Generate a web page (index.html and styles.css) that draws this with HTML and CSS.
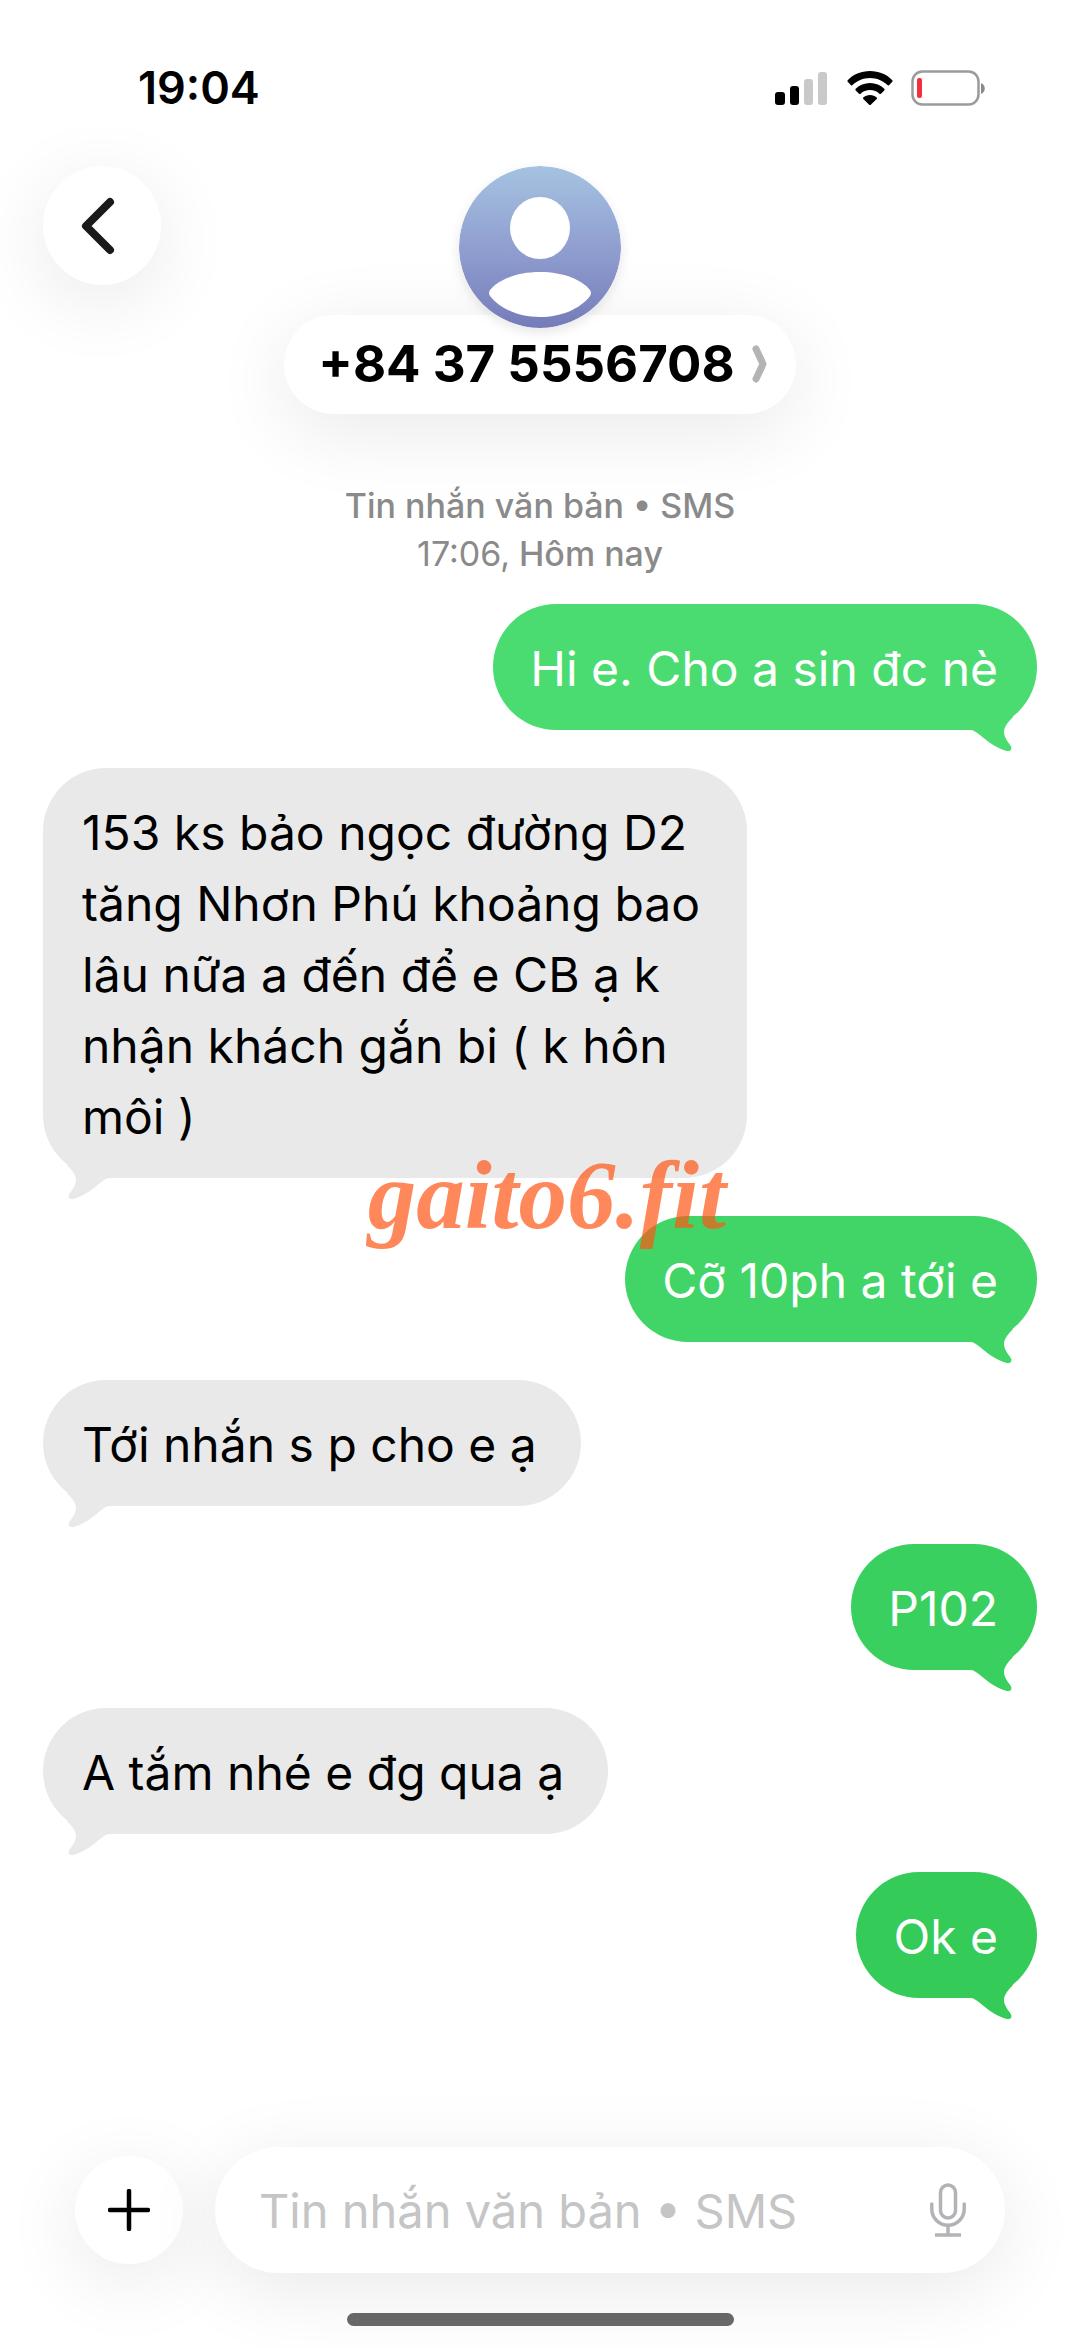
FILE: index.html
```html
<!DOCTYPE html>
<html lang="vi">
<head>
<meta charset="utf-8">
<meta name="viewport" content="width=device-width, initial-scale=1">
<title>+84 37 5556708</title>
<link rel="stylesheet" href="styles.css">
</head>
<body>
<svg class="defs" aria-hidden="true">
  <symbol id="tail" viewBox="0 0 72 64">
    <path d="M2 34V41H5C9 41 11 43 15 46C22 52 31 59 40 61.500C45 63 47.500 61 46 57.500C44 54 39 49 39 43C39 38 43 33 48 28L30 8Z"/>
  </symbol>
</svg>

<div class="status">
  <span class="status-time">19:04</span>
  <div class="status-icons">
    <svg width="54" height="34" viewBox="0 0 54 34" role="img" aria-label="Sóng di động">
      <rect x="0" y="21" width="10" height="13" rx="3"/>
      <rect x="15" y="15" width="9" height="19" rx="3"/>
      <rect x="29" y="8" width="9" height="26" rx="3" fill="#c9c9c9"/>
      <rect x="43" y="1" width="9" height="33" rx="3" fill="#c9c9c9"/>
    </svg>
    <svg width="46" height="34" viewBox="0 0 46 34" role="img" aria-label="Wi-Fi">
      <path d="M23 0C32 0 40 3.500 45.300 9.200Q46 10 45.300 10.800L42 14.200Q41.300 14.800 40.500 14.100C36 9.800 30 7 23 7S10 9.800 5.500 14.100Q4.700 14.800 4 14.200L.7 10.800Q0 10 .7 9.200C6 3.500 14 0 23 0Z"/>
      <path d="M23 12C28.500 12 33.500 14.200 37.300 17.800Q38 18.600 37.300 19.400L34 22.700Q33.200 23.400 32.400 22.700C30 20.300 26.600 19 23 19S16 20.300 13.600 22.700Q12.800 23.400 12 22.700L8.700 19.400Q8 18.600 8.700 17.800C12.500 14.200 17.500 12 23 12Z"/>
      <path d="M23 24C25.700 24 28 25 29.700 26.600Q30.400 27.300 29.700 28L23.800 33.700Q23 34.500 22.200 33.700L16.300 28Q15.600 27.300 16.300 26.600C18 25 20.300 24 23 24Z"/>
    </svg>
    <svg width="74" height="36" viewBox="0 0 74 36" role="img" aria-label="Pin yếu">
      <rect x="1.500" y="1.500" width="66" height="33" rx="10" fill="none" stroke="#9b9b9b" stroke-width="2.500"/>
      <rect x="6" y="8" width="5" height="20" rx="2" fill="#f5303e"/>
      <path d="M70 13C75 15 75 22 70 24Z" fill="#8a8a8a"/>
    </svg>
  </div>
</div>

<header class="header">
  <button class="round back" type="button" aria-label="Quay lại">
    <svg width="34" height="58" viewBox="0 0 34 58"><path d="M29 5 5 29 29 53" fill="none" stroke="#1a1a1a" stroke-width="8" stroke-linecap="round" stroke-linejoin="round"/></svg>
  </button>
  <div class="contact">
    <svg class="avatar" viewBox="0 0 162 162" aria-hidden="true">
      <defs>
        <linearGradient id="sky" x1="0" y1="0" x2="0" y2="1">
          <stop offset="0" stop-color="#a5c3e1"/>
          <stop offset=".5" stop-color="#919fd0"/>
          <stop offset="1" stop-color="#747cb9"/>
        </linearGradient>
      </defs>
      <circle cx="81" cy="81" r="81" fill="url(#sky)"/>
      <ellipse cx="81" cy="62" rx="30" ry="31" fill="#fff"/>
      <path d="M81 106C105 106 123 114 131 124Q133 127 131 130C121 143 102 151 81 151S41 143 31 130Q29 127 31 124C39 114 57 106 81 106Z" fill="#fff"/>
    </svg>
    <button class="contact-name" type="button">
      <span>+84 37 5556708</span>
      <svg width="16" height="40" viewBox="0 0 16 40" aria-hidden="true"><path d="M4 5 11 20 4 35" fill="none" stroke="#b4b4b4" stroke-width="7" stroke-linecap="round" stroke-linejoin="round"/></svg>
    </button>
  </div>
</header>

<main class="chat">
  <p class="info">Tin nhắn văn bản • SMS<br><time>17:06,</time> Hôm nay</p>
  <ul class="messages">
    <li class="bubble sent shade-1">Hi e. Cho a sin đc nè<svg class="tail"><use href="#tail"/></svg></li>
    <li class="bubble received">153 ks bảo ngọc đường D2 tăng Nhơn Phú khoảng bao lâu nữa a đến để e CB ạ k nhận khách gắn bi ( k hôn môi )<svg class="tail"><use href="#tail"/></svg></li>
    <li class="bubble sent shade-2">Cỡ 10ph a tới e<svg class="tail"><use href="#tail"/></svg><span class="stamp">gaito6.fit</span></li>
    <li class="bubble received">Tới nhắn s p cho e ạ<svg class="tail"><use href="#tail"/></svg></li>
    <li class="bubble sent shade-3">P102<svg class="tail"><use href="#tail"/></svg></li>
    <li class="bubble received">A tắm nhé e đg qua ạ<svg class="tail"><use href="#tail"/></svg></li>
    <li class="bubble sent shade-4">Ok e<svg class="tail"><use href="#tail"/></svg></li>
  </ul>
</main>

<footer class="footer">
  <form class="composer">
    <button class="round plus" type="button" aria-label="Thêm">
      <svg width="42" height="42" viewBox="0 0 42 42"><path d="M21 2V40M2 21H40" fill="none" stroke="#000" stroke-width="4.500" stroke-linecap="round"/></svg>
    </button>
    <div class="field">
      <input class="field-input" type="text" aria-label="Tin nhắn" placeholder="Tin nhắn văn bản • SMS">
      <button class="mic" type="button" aria-label="Đọc chính tả">
        <svg width="36" height="54" viewBox="0 0 36 54" fill="none" stroke="#b2b3b6" stroke-width="3.500"><rect x="10.500" y="2" width="15" height="33" rx="7.500"/><path d="M1.800 21V26A16.200 16.200 0 0 0 34.200 26V21" stroke-linecap="round"/><path d="M18 43V52M5 52H31"/></svg>
      </button>
    </div>
  </form>
  <div class="home-bar"></div>
</footer>
</body>
</html>
```
FILE: styles.css
```css
* {
  box-sizing: border-box;
}

body {
  margin: 0;
  min-height: 100vh;
  display: flex;
  flex-direction: column;
  background: #fff;
  color: #000;
  font-family: Inter, "Noto Sans", sans-serif;
  font-size: 48px;
  overflow-x: hidden;
}

button,
input {
  border: 0;
  padding: 0;
  background: none;
  font: inherit;
  color: inherit;
}

svg {
  display: block;
  flex: none;
}

.defs {
  position: absolute;
  width: 0;
  height: 0;
}

/* Status bar */
.status {
  display: flex;
  align-items: center;
  justify-content: space-between;
  padding: 58px 95px 0 138px;
}

.status-time {
  font-size: 45px;
  line-height: 60px;
  font-weight: 600;
}

.status-icons {
  display: flex;
  align-items: center;
  gap: 18px;
}

/* Header */
.header {
  display: grid;
  grid-template-columns: 1fr auto 1fr;
  align-items: start;
  padding: 48px 43px 0;
}

.round {
  display: flex;
  align-items: center;
  justify-content: center;
  flex: none;
  border-radius: 50%;
  background: #fff;
  box-shadow: 0 16px 80px rgba(0, 0, 0, .09);
}

.back {
  width: 118px;
  height: 119px;
  padding-right: 8px;
}

.contact {
  display: flex;
  flex-direction: column;
  align-items: center;
}

.avatar {
  position: relative;
  z-index: 1;
  width: 162px;
  height: 162px;
  border-radius: 50%;
  box-shadow: 0 4px 12px rgba(0, 0, 0, .1);
}

.contact-name {
  display: flex;
  align-items: center;
  gap: 17px;
  height: 99px;
  margin-top: -13px;
  padding: 0 28px 2px 34px;
  border-radius: 50px;
  background: #fff;
  box-shadow: 0 16px 80px rgba(0, 0, 0, .09);
  font-size: 51px;
  font-weight: 700;
}

/* Conversation */
.chat {
  padding: 68px 43px 0;
}

.info {
  margin: 0 0 26px;
  color: #8a8a8a;
  font-size: 34px;
  line-height: 48px;
  font-weight: 500;
  text-align: center;
}

.info time {
  font-weight: 400;
}

.messages {
  display: flex;
  flex-direction: column;
  gap: 38px;
  margin: 0;
  padding: 0;
  list-style: none;
}

.bubble {
  position: relative;
  max-width: 704px;
  padding: 29px 39px 26px;
  border-radius: 63px;
  line-height: 71px;
}

.received {
  align-self: flex-start;
  padding-right: 44px;
  background: #e9e9e9;
  fill: #e9e9e9;
}

.sent {
  align-self: flex-end;
  padding-left: 37px;
  color: #fff;
}

.shade-1 {
  background: #4bdc71;
  fill: #4bdc71;
}

.shade-2 {
  background: #40d566;
  fill: #40d566;
}

.shade-3 {
  background: #3ad05f;
  fill: #3ad05f;
}

.shade-4 {
  background: #35cb59;
  fill: #35cb59;
}

.tail {
  position: absolute;
  right: 0;
  bottom: -23px;
  width: 72px;
  height: 64px;
}

.received .tail {
  right: auto;
  left: 0;
  transform: scaleX(-1);
}

.stamp {
  position: absolute;
  right: 311px;
  top: -70px;
  color: rgba(255, 85, 20, .7);
  font-family: "Liberation Serif", serif;
  font-size: 97px;
  line-height: 100px;
  font-weight: 700;
  font-style: italic;
  white-space: nowrap;
}

/* Composer */
.footer {
  margin-top: auto;
  padding: 40px 75px 22px;
}

.composer {
  display: flex;
  align-items: center;
  gap: 32px;
}

.plus {
  width: 108px;
  height: 108px;
}

.field {
  display: flex;
  align-items: center;
  flex: 1;
  min-width: 0;
  height: 126px;
  padding: 0 39px 0 44px;
  border-radius: 63px;
  background: #fff;
  box-shadow: 0 16px 80px rgba(0, 0, 0, .09);
}

.field-input {
  flex: 1;
  min-width: 0;
  font-size: 47px;
  outline: 0;
}

.field-input::placeholder {
  color: #c5c5c5;
  opacity: 1;
}

.home-bar {
  width: 50%;
  max-width: 387px;
  height: 13px;
  margin: 40px auto 0;
  border-radius: 7px;
  background: #6a6a6a;
}
```
